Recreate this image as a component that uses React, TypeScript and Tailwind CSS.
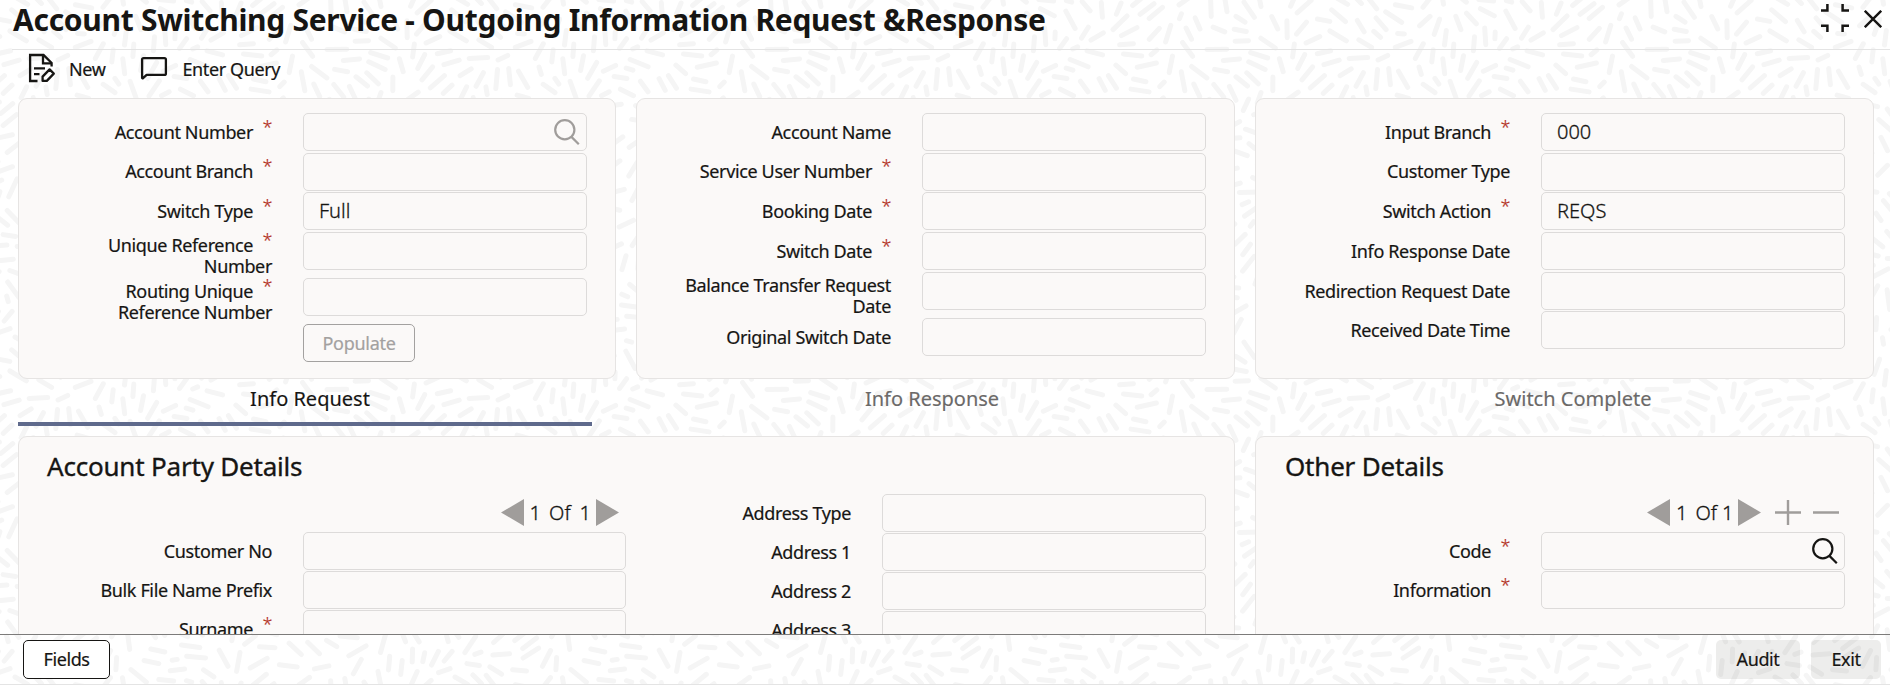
import { Fragment, useId, type ReactNode } from 'react';

/* ---------- textured backdrop ---------- */

const TILE_W = 440;
const TILE_H = 340;

function buildDashes(): string {
  let seed = 20231;
  const rand = () => {
    seed = (seed * 1664525 + 1013904223) % 4294967296;
    return seed / 4294967296;
  };
  const wrap = (d: number, size: number) => {
    const m = Math.abs(d) % size;
    return Math.min(m, size - m);
  };
  const points: [number, number][] = [];
  const parts: string[] = [];
  const tau = Math.PI * 2;
  for (let i = 0; i < 22000; i++) {
    const x = rand() * TILE_W;
    const y = rand() * TILE_H;
    const half = i < 14000 ? 6 + rand() * 4 : 2.5 + rand() * 3;
    const u = (x / TILE_W) * tau;
    const v = (y / TILE_H) * tau;
    const angle = -1.1 + 1.3 * Math.sin(2 * u + v) + 0.9 * Math.cos(2 * v - u);
    const dx = Math.cos(angle) * half;
    const dy = Math.sin(angle) * half;
    const own: [number, number][] = [
      [x - dx, y - dy],
      [x, y],
      [x + dx, y + dy],
    ];
    const hit = own.some(([px, py]) =>
      points.some(([qx, qy]) => Math.hypot(wrap(px - qx, TILE_W), wrap(py - qy, TILE_H)) < 9.2),
    );
    if (hit) continue;
    points.push(...own);
    for (const ox of [-TILE_W, 0, TILE_W]) {
      for (const oy of [-TILE_H, 0, TILE_H]) {
        const cx = x + ox;
        const cy = y + oy;
        if (cx < -20 || cy < -20 || cx > TILE_W + 20 || cy > TILE_H + 20) continue;
        parts.push(
          `M${(cx - dx).toFixed(1)} ${(cy - dy).toFixed(1)}L${(cx + dx).toFixed(1)} ${(cy + dy).toFixed(1)}`,
        );
      }
    }
  }
  return parts.join('');
}

const DASHES = buildDashes();

function Backdrop() {
  const id = useId();
  return (
    <svg className="absolute inset-0 -z-10 h-full w-full" aria-hidden="true">
      <defs>
        <pattern id={id} width={TILE_W} height={TILE_H} patternUnits="userSpaceOnUse">
          <path d={DASHES} stroke="#f5f5f5" strokeWidth="5" strokeLinecap="round" fill="none" />
        </pattern>
      </defs>
      <rect width="100%" height="100%" fill={`url(#${id})`} />
    </svg>
  );
}

/* ---------- icons ---------- */

function NewIcon() {
  return (
    <svg width="28" height="30" viewBox="0 0 28 30" fill="none" stroke="#161513" strokeWidth="2.3">
      <path d="M9.5 28H2.1V2H15.5L23.6 10V13.5" />
      <path d="M15 2V10.4H23.6" />
      <path d="M6 15.4H17M6 21.2H11.5" />
      <path d="M14.6 27.9V23.6L21.6 16.4L25.8 20.6L18.8 27.9Z" strokeLinejoin="round" />
    </svg>
  );
}

function ChatIcon() {
  return (
    <svg width="28" height="24" viewBox="0 0 28 24" fill="none" stroke="#161513" strokeWidth="2.3">
      <path d="M2.1 22V3.6Q2.1 2.1 3.6 2.1H24.4Q25.9 2.1 25.9 3.6V17.4Q25.9 18.9 24.4 18.9H6.6L2.8 22.4Z" strokeLinejoin="round" />
    </svg>
  );
}

function SearchIcon({ color }: { color: string }) {
  return (
    <svg width="26" height="26" viewBox="0 0 26 26" fill="none" stroke={color} strokeWidth="2.2">
      <circle cx="10.8" cy="10.8" r="9.6" />
      <path d="M17.2 17.6L24.8 25.2" />
    </svg>
  );
}

function RestoreIcon() {
  return (
    <svg width="28" height="28" viewBox="0 0 28 28" fill="none" stroke="#161513" strokeWidth="2.5">
      <path d="M0 6.6H6.4V0M28 6.6H21.6V0M0 21.8H6.4V28.6M28 21.8H21.6V28.6" />
    </svg>
  );
}

function CloseIcon() {
  return (
    <svg width="18" height="18" viewBox="0 0 18 18" fill="none" stroke="#161513" strokeWidth="2.4">
      <path d="M0.8 0.8L17.2 17.2M17.2 0.8L0.8 17.2" />
    </svg>
  );
}

function Arrow({ left = false }: { left?: boolean }) {
  return (
    <svg width="23" height="27" viewBox="0 0 23 27" fill="#a09d9b">
      <path d={left ? 'M23 0V27L0 13.5Z' : 'M0 0V27L23 13.5Z'} />
    </svg>
  );
}

/* ---------- form pieces ---------- */

type FieldSpec = {
  label: string[];
  required?: boolean;
  value?: string;
  icon?: ReactNode;
};

function Field({
  spec,
  labelWidth,
  inputWidth,
  rowHeight,
}: {
  spec: FieldSpec;
  labelWidth: string;
  inputWidth: string;
  rowHeight: string;
}) {
  const twoLines = spec.label.length > 1;
  return (
    <div className={`flex ${twoLines ? 'h-[46px]' : rowHeight}`}>
      <div
        className={`${labelWidth} ${twoLines ? 'pt-[3px]' : 'pt-[8.8px]'} shrink-0 text-right text-[18px] leading-[21px] tracking-[-0.36px] whitespace-nowrap [-webkit-text-stroke:0.2px]`}
      >
        {spec.label.map((line, i) => (
          <Fragment key={line}>
            {i > 0 && <br />}
            {line}
            {i === 0 && spec.required && (
              <span className="relative -top-[5px] inline-block h-[16px] w-[19px] text-right leading-[21px] font-light text-[#b3311f]">
                *
              </span>
            )}
          </Fragment>
        ))}
      </div>
      <div
        className={`${inputWidth} ml-[31px] flex h-[38px] shrink-0 items-center rounded-[5px] border border-[#dddbda] pr-[6px] pl-[15px] text-[20px] font-light [-webkit-text-stroke:0.3px]`}
      >
        <span className="flex-1">{spec.value}</span>
        {spec.icon}
      </div>
    </div>
  );
}

function FieldColumn(props: { fields: FieldSpec[]; labelWidth: string; inputWidth: string; rowHeight: string }) {
  const { fields, ...rest } = props;
  return (
    <div className="flex flex-col">
      {fields.map((spec) => (
        <Field key={spec.label[0]} spec={spec} {...rest} />
      ))}
    </div>
  );
}

const search = (color: string) => (
  <span className="-mt-[1px]">
    <SearchIcon color={color} />
  </span>
);

const accountFields: FieldSpec[] = [
  { label: ['Account Number'], required: true, icon: search('#a09d9b') },
  { label: ['Account Branch'], required: true },
  { label: ['Switch Type'], required: true, value: 'Full' },
  { label: ['Unique Reference', 'Number'], required: true },
  { label: ['Routing Unique', 'Reference Number'], required: true },
];

const switchFields: FieldSpec[] = [
  { label: ['Account Name'] },
  { label: ['Service User Number'], required: true },
  { label: ['Booking Date'], required: true },
  { label: ['Switch Date'], required: true },
  { label: ['Balance Transfer Request', 'Date'] },
  { label: ['Original Switch Date'] },
];

const statusFields: FieldSpec[] = [
  { label: ['Input Branch'], required: true, value: '000' },
  { label: ['Customer Type'] },
  { label: ['Switch Action'], required: true, value: 'REQS' },
  { label: ['Info Response Date'] },
  { label: ['Redirection Request Date'] },
  { label: ['Received Date Time'] },
];

const partyFields: FieldSpec[] = [
  { label: ['Customer No'] },
  { label: ['Bulk File Name Prefix'] },
  { label: ['Surname'], required: true },
];

const addressFields: FieldSpec[] = [
  { label: ['Address Type'] },
  { label: ['Address 1'] },
  { label: ['Address 2'] },
  { label: ['Address 3'] },
];

const otherFields: FieldSpec[] = [
  { label: ['Code'], required: true, icon: search('#161513') },
  { label: ['Information'], required: true },
];

const card = 'rounded-[9px] border border-[#e6e4e3] bg-[#fbf9f8]';
const pagerText = 'text-[20px] leading-[27px] font-light [-webkit-text-stroke:0.3px]';

export default function App() {
  return (
    <div className="relative isolate flex h-[685px] w-[1890px] flex-col overflow-hidden bg-white font-['Noto_Sans','Open_Sans',sans-serif] text-[#161513]">
      <Backdrop />

      <header className="ml-3 flex h-[50px] shrink-0 justify-between border-b border-[#e4e4e4]">
        <h1 className="pl-[1px] text-[30px] leading-[40px] font-bold tracking-[-0.29px]">
          Account Switching Service - Outgoing Information Request &amp;Response
        </h1>
        <div className="flex gap-[15px] pt-[4px] pr-[8px]">
          <RestoreIcon />
          <span className="pt-[6px]">
            <CloseIcon />
          </span>
        </div>
      </header>

      <div className="flex h-[48px] shrink-0 pl-[28px] text-[18px] leading-[24px] tracking-[-0.38px] [-webkit-text-stroke:0.2px]">
        <button className="flex items-start pt-[3px]">
          <NewIcon />
          <span className="ml-[13px] pt-[4px]">New</span>
        </button>
        <button className="ml-[35px] flex items-start pt-[3px]">
          <span className="pt-[3px]">
            <ChatIcon />
          </span>
          <span className="ml-[14px] pt-[4px]">Enter Query</span>
        </button>
      </div>

      <main className="min-h-0 flex-1 overflow-hidden pl-[18px]">
        <div className="flex">
          <section className={`${card} h-[281px] w-[598px] shrink-0 pt-[14px]`}>
            <FieldColumn fields={accountFields} labelWidth="w-[253px]" inputWidth="w-[284px]" rowHeight="h-[39.7px]" />
            <button className="ml-[284px] block h-[38px] w-[112px] rounded-[5px] border border-[#a3a1a0] pt-[1px] text-[18px] tracking-[-0.3px] text-[#a3a1a0] [-webkit-text-stroke:0.2px]">
              Populate
            </button>
          </section>
          <section className={`${card} ml-[20px] h-[281px] w-[599px] shrink-0 pt-[14px]`}>
            <FieldColumn fields={switchFields} labelWidth="w-[254px]" inputWidth="w-[284px]" rowHeight="h-[39.7px]" />
          </section>
          <section className={`${card} ml-[20px] h-[281px] w-[619px] shrink-0 pt-[14px]`}>
            <FieldColumn fields={statusFields} labelWidth="w-[254px]" inputWidth="w-[304px]" rowHeight="h-[39.7px]" />
          </section>
        </div>

        <nav className="flex h-[57px] text-[20px] leading-[27px] [-webkit-text-stroke:0.15px]">
          <div className="h-[47px] w-[574px] border-b-4 border-[#5f6a8c] pt-[6px] pl-[10px] text-center">Info Request</div>
          <div className="ml-[53px] w-[574px] pt-[6px] text-center text-[#6b6968]">Info Response</div>
          <div className="ml-[67px] w-[574px] pt-[6px] text-center text-[#6b6968]">Switch Complete</div>
        </nav>

        <div className="flex">
          <section className={`${card} h-[320px] w-[1217px] shrink-0`}>
            <h2 className="pt-[11px] pb-[1px] pl-[28px] text-[26px] leading-[36px] tracking-[-0.2px] [-webkit-text-stroke:0.35px]">
              Account Party Details
            </h2>
            <div className="flex pt-[9px]">
              <div>
                <div className={`${pagerText} flex h-[38px] w-[600px] justify-end pt-[5px]`}>
                  <Arrow left />
                  <span className="ml-[6px]">1</span>
                  <span className="ml-[8px]">Of</span>
                  <span className="mr-[5px] ml-[9px]">1</span>
                  <Arrow />
                </div>
                <FieldColumn fields={partyFields} labelWidth="w-[253px]" inputWidth="w-[323px]" rowHeight="h-[39px]" />
              </div>
              <FieldColumn fields={addressFields} labelWidth="w-[225px]" inputWidth="w-[324px]" rowHeight="h-[39px]" />
            </div>
          </section>
          <section className={`${card} ml-[20px] h-[320px] w-[619px] shrink-0`}>
            <h2 className="pt-[11px] pb-[1px] pl-[29px] text-[26px] leading-[36px] tracking-[-0.2px] [-webkit-text-stroke:0.35px]">
              Other Details
            </h2>
            <div className={`${pagerText} flex h-[47px] pt-[14px] pl-[391px]`}>
              <Arrow left />
              <span className="ml-[6px]">1</span>
              <span className="ml-[8px]">Of</span>
              <span className="mr-[5px] ml-[5px]">1</span>
              <Arrow />
              <svg className="ml-[14px]" width="64" height="27" viewBox="0 0 64 27" stroke="#a09d9b" strokeWidth="2.4">
                <path d="M0 13.5H26M13 1V26M38 13.5H64" />
              </svg>
            </div>
            <FieldColumn fields={otherFields} labelWidth="w-[254px]" inputWidth="w-[304px]" rowHeight="h-[39px]" />
          </section>
        </div>
      </main>

      <footer className="flex h-[51px] shrink-0 items-start border-t border-b border-t-[#7c7b7a] border-b-[#e4e4e4] pt-[5px] pr-[9px] pl-[23px] text-[18px] tracking-[-0.4px] [-webkit-text-stroke:0.2px]">
        <button className="h-[39px] w-[87px] rounded-[5px] border border-[#161513] bg-white">Fields</button>
        <button className="ml-auto h-[39px] w-[84px] rounded-[5px] bg-[#161513]/8">Audit</button>
        <button className="ml-[11px] h-[39px] w-[70px] rounded-[5px] bg-[#161513]/8">Exit</button>
      </footer>
    </div>
  );
}
